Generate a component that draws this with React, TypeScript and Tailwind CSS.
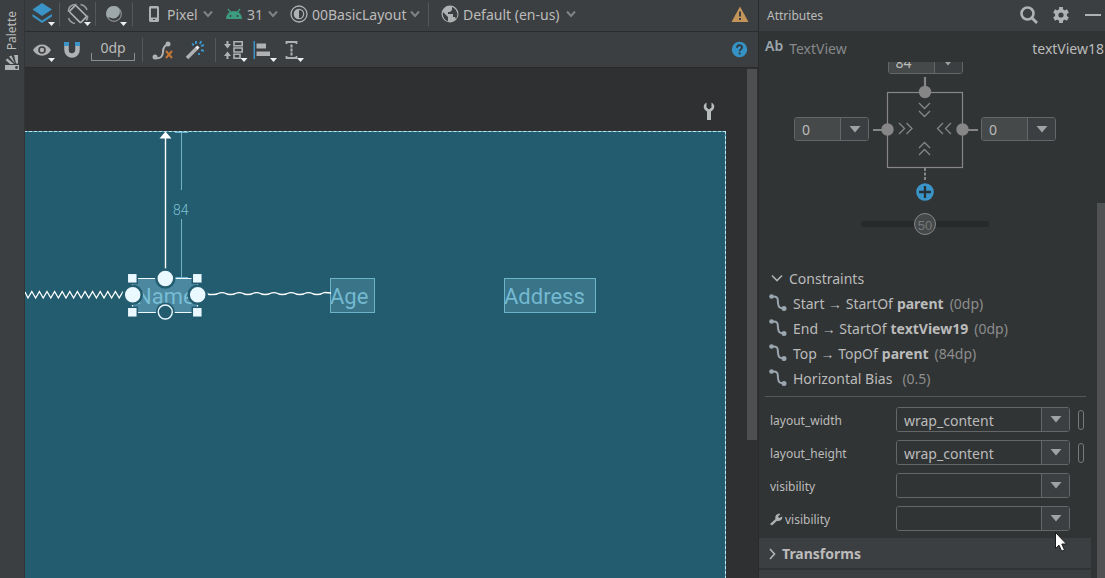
import React from "react";

const zigzag =
  "M25 292" +
  Array.from({ length: 13 }, (_, i) => {
    const x = 25 + i * 7.6;
    return ` L${x + 3} 298 L${x + 6.8} 291.5`;
  }).join("");

const wave =
  "M207 293 L209 294.5 H213" +
  Array.from({ length: 7 }, (_, i) => {
    const x = 213 + i * 17.3;
    return i < 6
      ? ` q4 0 5 -1 q4 -1.8 8 0 q1 1 4.3 1`
      : ` q4 0 5 -1 L${x + 8} 292.5 L331 293`;
  }).join("");

function Separator() {
  return <span className="h-6 w-px shrink-0 bg-[#555759]" />;
}

function Chevron() {
  return (
    <svg width="10" height="8" viewBox="0 0 10 8" className="shrink-0" aria-hidden="true">
      <path d="M1 1.500 5 6l4-4.500" fill="none" stroke="#7f8385" strokeWidth="2" />
    </svg>
  );
}

function ToolButton({
  label,
  className,
  children,
}: {
  label: string;
  className: string;
  children: React.ReactNode;
}) {
  return (
    <button type="button" aria-label={label} className={`flex h-full shrink-0 items-center justify-center ${className}`}>
      <svg width="28" height="28" viewBox="0 0 28 28" className="shrink-0" aria-hidden="true">
        {children}
      </svg>
    </button>
  );
}

function More({ x = 20 }: { x?: number }) {
  return <path d={`M${x} 22h7l-3.500 4z`} fill="#eceeef" />;
}

function MenuButton({
  text,
  className,
  icon,
}: {
  text: string;
  className: string;
  icon: React.ReactNode;
}) {
  return (
    <button type="button" className={`flex h-full shrink-0 items-center whitespace-nowrap text-left ${className}`}>
      <svg width="18" height="20" viewBox="0 0 18 20" className="shrink-0" aria-hidden="true">
        {icon}
      </svg>
      <span className="ml-1 flex-1 pt-px">{text}</span>
      <Chevron />
    </button>
  );
}

function DesignToolbar() {
  return (
    <div className="flex h-8 items-center border-b border-[#2b2b2b] bg-[#3c3f41] pb-1 text-[14px]">
      <ToolButton label="Select design surface" className="w-[34px]">
        <path d="M4.500 9.500 14 3l10 6.500L14 16z" fill="#3a94c8" />
        <path d="M4.500 14 14 20.500 24 14v2.500L14 23 4.500 16.500z" fill="#3a94c8" />
        <More />
      </ToolButton>
      <Separator />
      <ToolButton label="Orientation" className="w-[35px]">
        <rect x="9.500" y="6" width="9" height="16" rx="1" fill="none" stroke="#afb1b3" strokeWidth="1.600" transform="rotate(-45 14 14)" />
        <path d="M4.500 12C4 7 8 4 12.500 4.500M4.500 18c1 3 3.500 5 6.500 5.500M23.500 15.500c.3 2-.2 4-1.500 5M16.500 4.500c3 .6 5.500 2.500 6.500 5.500" fill="none" stroke="#9a9d9f" strokeWidth="1.500" />
        <More />
      </ToolButton>
      <Separator />
      <ToolButton label="Night mode" className="w-[36px]">
        <circle cx="14" cy="14" r="7.300" fill="none" stroke="#8d9294" strokeWidth="1.200" />
        <path d="M18.500 8a6.500 6.500 0 0 1-8.500 9.500 8 8 0 0 1-2.800-.5A7.300 7.300 0 0 1 18.500 8z" fill="#9da8ab" />
        <More />
      </ToolButton>
      <Separator />
      <MenuButton
        text="Pixel"
        className="ml-3 w-[68px]"
        icon={
          <path fillRule="evenodd" d="M5.500 2h7A1.500 1.500 0 0 1 14 3.500v13a1.500 1.500 0 0 1-1.500 1.500h-7A1.500 1.500 0 0 1 4 16.500v-13A1.500 1.500 0 0 1 5.500 2zM6 4.500v9h6v-9zm2 10.500v1h2v-1z" fill="#afb1b3" />
        }
      />
      <MenuButton
        text="31"
        className="ml-3 w-[53px]"
        icon={
          <>
            <path d="M1 15a8 8 0 0 1 16 0z" fill="#3d9c80" />
            <path d="m3 5 3 4M15 5l-3 4" stroke="#3d9c80" strokeWidth="1.300" />
            <circle cx="5.500" cy="12" r="1" fill="#3c3f41" />
            <circle cx="12.500" cy="12" r="1" fill="#3c3f41" />
          </>
        }
      />
      <MenuButton
        text="00BasicLayout"
        className="ml-3 w-[130px]"
        icon={
          <>
            <circle cx="9" cy="10" r="8" fill="none" stroke="#afb1b3" strokeWidth="1.300" />
            <circle cx="9" cy="10" r="4.700" fill="none" stroke="#afb1b3" strokeWidth="1.200" />
            <path d="M9 5a5 5 0 0 0 0 10z" fill="#afb1b3" />
          </>
        }
      />
      <span className="w-2" />
      <Separator />
      <MenuButton
        text="Default (en-us)"
        className="ml-3 w-[135px]"
        icon={
          <>
            <circle cx="9" cy="10" r="8.500" fill="#afb1b3" />
            <path d="M2 8l5 5v4.500A8 8 0 0 1 2 8zM11 3v3L9 8H7v2h5v3h2l1 2a8 8 0 0 0-2-11z" fill="#3c3f41" />
          </>
        }
      />
      <span className="flex-1" />
      <button type="button" aria-label="Show warnings" className="mr-2 shrink-0">
        <svg width="20" height="18" viewBox="0 0 20 18" aria-hidden="true">
          <path d="M10 1.500 18.500 17h-17z" fill="#c4955a" />
          <path d="M9 6.500h2v5H9zM9 13h2v2H9z" fill="#3c3f41" />
        </svg>
      </button>
    </div>
  );
}

function ConstraintToolbar() {
  return (
    <div className="flex h-9 items-center border-b border-[#2b2b2b] bg-[#3c3f41] text-[14px]">
      <ToolButton label="View options" className="w-[34px]">
        <path d="M5 14c4-7.500 14-7.500 18 0-4 7.500-14 7.500-18 0z" fill="#afb1b3" />
        <circle cx="14" cy="14" r="3.800" fill="#3c3f41" />
        <circle cx="14" cy="14" r="2.200" fill="#afb1b3" />
        <More />
      </ToolButton>
      <ToolButton label="Autoconnect" className="w-[26px]">
        <path d="M8.500 9.500V14a5.500 5.500 0 0 0 11 0V9.500" fill="none" stroke="#afb1b3" strokeWidth="4.500" />
        <path d="M6 6h5v4H6zM17 6h5v4h-5z" fill="#3a94c8" />
      </ToolButton>
      <button type="button" className="ml-[6px] flex h-[22px] w-[44px] shrink-0 flex-col items-center leading-[18px]">
        <span>0dp</span>
        <span className="-mt-[4px] h-2 w-full border-x border-b border-[#8c8f91]" />
      </button>
      <span className="w-[7px]" />
      <Separator />
      <ToolButton label="Clear all constraints" className="w-[40px]">
        <path d="M6 22c6 1 8-2 8-6s1-7 6-8" fill="none" stroke="#afb1b3" strokeWidth="2" />
        <circle cx="6" cy="21" r="2.500" fill="#afb1b3" />
        <circle cx="19" cy="8" r="2.500" fill="#afb1b3" />
        <path d="m17 15 6 7M23 15l-6 7" stroke="#c57633" strokeWidth="2" />
      </ToolButton>
      <ToolButton label="Infer constraints" className="w-[24px]">
        <path d="M6 22 16.500 11.500" stroke="#afb1b3" strokeWidth="3.500" />
        <path d="m15.500 12.500 2-2" stroke="#eceeef" strokeWidth="3" />
        <path d="M15 5v3M11 8l2 1M20 5l-1 3M23 9l-3 1M20 14l3 1M18 17v2" stroke="#3a94c8" strokeWidth="2" />
      </ToolButton>
      <span className="w-[8px]" />
      <Separator />
      <ToolButton label="Pack" className="w-[36px]">
        <path d="M7.500 5v6M7.500 23v-6" stroke="#afb1b3" strokeWidth="2" />
        <path d="M4 8h7l-3.500 4.500zM4 20h7l-3.500-4.500z" fill="#afb1b3" />
        <path d="M14 5.800h8.200v4H14zM14 12h8.200v4H14zM14 18.300h6v4h-6z" fill="none" stroke="#afb1b3" strokeWidth="1.600" />
        <path d="M20.500 22h7L24 26z" fill="#eceeef" />
      </ToolButton>
      <ToolButton label="Align" className="w-[24px]">
        <path d="M3.500 5H5v18H3.500z" fill="#3a94c8" />
        <path d="M6.500 7.500H16v5H6.500zM6.500 15.500H20v4.500H6.500z" fill="#afb1b3" />
        <More />
      </ToolButton>
      <ToolButton label="Guidelines" className="w-[34px]">
        <path d="M7 6h11M7 22h11M7.500 5v3M17.500 5v3M7.500 20v3M17.500 20v3" stroke="#afb1b3" strokeWidth="1.800" />
        <path d="M12.500 8.500v11" stroke="#afb1b3" strokeWidth="2" strokeDasharray="3 1" />
        <path d="M18 22h7l-3.500 4z" fill="#eceeef" />
      </ToolButton>
      <span className="flex-1" />
      <button type="button" aria-label="Help" className="mr-[10px] shrink-0">
        <svg width="17" height="17" viewBox="0 0 17 17" aria-hidden="true">
          <circle cx="8.500" cy="8.500" r="7.700" fill="#3592c4" />
          <path d="M6 6.800c0-3.400 5-3.400 5-.3 0 1.900-2.400 1.800-2.400 3.700M8.600 11.500v2" fill="none" stroke="#30373b" strokeWidth="1.800" />
        </svg>
      </button>
    </div>
  );
}

function Blueprint() {
  return (
    <div className="relative mr-[21px] h-full overflow-hidden bg-[#235c6f] font-[Roboto,sans-serif]">
      <div className="absolute inset-x-0 top-0 h-px bg-[#5ba4b9]" />
      <div className="absolute inset-y-0 right-0 w-px bg-[#5ba4b9]" />
      <div className="absolute -bottom-px -left-px right-0 top-0 border border-dashed border-[#b9e6f2]" />
      <div className="absolute left-[107px] top-[147px] h-[35px] w-[66px] bg-[#4c88a0] pl-[4px] text-[22px] leading-[37px] text-[#78bdd4]">
        Name
      </div>
      <div className="absolute left-[305px] top-[147px] h-[35px] w-[45px] bg-[#397488] text-[22px] leading-[38px] text-[#74b9d0] outline-1 -outline-offset-1 outline-[#6bb4c9]">
        Age
      </div>
      <div className="absolute left-[479px] top-[147px] h-[35px] w-[92px] bg-[#397488] text-[22px] leading-[38px] text-[#74b9d0] outline-1 -outline-offset-1 outline-[#6bb4c9]">
        Address
      </div>
      <span className="absolute left-[148px] top-[71px] text-[14px] font-light leading-4 text-[#7cc0d4]">84</span>
      <svg className="absolute left-0 top-0" width="320" height="200" viewBox="25 131 320 200" aria-hidden="true">
        <path d="M175 132.500h13M181.500 133v57M181.500 219v59M175 277.500h13" stroke="#6fb3ca" fill="none" />
        <path d="M165.500 136v134" stroke="#fff" strokeWidth="1.400" />
        <path d="m165.500 131.500 6 7h-12z" fill="#fff" />
        <path d={zigzag} fill="none" stroke="#fff" strokeWidth="1.300" />
        <path d={wave} fill="none" stroke="#fff" strokeWidth="1.300" />
        <path d="M132.500 278.500h65v34h-65z" fill="none" stroke="#eef9ff" strokeWidth="1.200" />
        <g fill="#eaf8ff" stroke="#235c6f" strokeWidth="1.500">
          <rect x="127.300" y="273.300" width="10" height="10" />
          <rect x="192.300" y="273.300" width="10" height="10" />
          <rect x="127.300" y="307.300" width="10" height="10" />
          <rect x="192.300" y="307.300" width="10" height="10" />
        </g>
        <g fill="#eaf8ff" stroke="#235c6f" strokeWidth="2.500">
          <circle cx="165.300" cy="278.500" r="9" />
          <circle cx="132.700" cy="294.700" r="9" />
          <circle cx="197.700" cy="294.700" r="9" />
        </g>
        <circle cx="165.300" cy="312" r="9.500" fill="#235c6f" />
        <circle cx="165.300" cy="312" r="7" fill="none" stroke="#eaf8ff" strokeWidth="1.400" />
      </svg>
    </div>
  );
}

function Combo({
  id,
  label,
  value,
  className,
  arrow,
  field,
}: {
  id: string;
  label?: string;
  value: string;
  className: string;
  arrow: string;
  field: string;
}) {
  return (
    <span className={`grid overflow-hidden rounded-[3px] border border-[#646667] ${className}`}>
      <select id={id} aria-label={label} defaultValue={value} className={`col-start-1 row-start-1 min-w-0 appearance-none outline-none ${field}`}>
        <option value={value}>{value}</option>
      </select>
      <span className={`pointer-events-none col-start-1 row-start-1 flex items-center justify-center justify-self-end border-l border-[#646667] bg-[#3c3f41] ${arrow}`}>
        <svg width="12" height="7" viewBox="0 0 12 7" aria-hidden="true">
          <path d="M.5 0h11L6 6.500z" fill="#9fa2a4" />
        </svg>
      </span>
    </span>
  );
}

function MarginCombo({ id, label, value, className }: { id: string; label: string; value: string; className: string }) {
  return (
    <Combo
      id={id}
      label={label}
      value={value}
      className={`h-6 w-[75px] ${className}`}
      arrow="w-7"
      field="bg-[#45494a] pl-[7px] text-[14px] text-[#bbbbbb]"
    />
  );
}

function ConstraintWidget() {
  return (
    <div className="flex flex-col items-center">
      <MarginCombo id="margin-top" label="Top margin" value="84" className="-mt-[12px]" />
      <div className="flex items-start">
        <MarginCombo id="margin-start" label="Start margin" value="0" className="mt-[43px]" />
        <svg width="112" height="130" viewBox="869 74 112 130" aria-hidden="true">
          <g stroke="#868686" fill="none">
            <rect x="887.500" y="92.500" width="75" height="75" strokeWidth="1.200" />
            <path d="M925 77v15M873 130h14M963 130h15" strokeWidth="2.200" />
            <path d="M925 168v13" strokeWidth="2" strokeDasharray="3 1.500" />
            <path strokeWidth="1.300" d="m919 103 5.500 5.500 5.500-5.500M919 111l5.500 5.500 5.500-5.500M919 148l5.500-5.500 5.500 5.500M919 155l5.500-5.500 5.500 5.500M899 123l5.500 5.500-5.500 5.500M906.500 123l5.500 5.500-5.500 5.500M943 123l-5.500 5.500 5.500 5.500M951 123l-5.500 5.500 5.500 5.500" />
          </g>
          <g fill="#868686">
            <circle cx="925" cy="92" r="6.200" />
            <circle cx="887.500" cy="129.500" r="6.200" />
            <circle cx="962.500" cy="129.500" r="6.200" />
          </g>
          <circle cx="925" cy="192" r="8.800" fill="#3a94c8" />
          <path d="M925 186v12M919 192h12" stroke="#263238" strokeWidth="2.300" />
        </svg>
        <MarginCombo id="margin-end" label="End margin" value="0" className="mt-[43px]" />
      </div>
      <div className="mt-[8px] grid h-6 w-32 items-center">
        <input
          type="range"
          min="0"
          max="100"
          defaultValue="50"
          aria-label="Horizontal bias"
          className="col-start-1 row-start-1 h-[6px] w-full appearance-none rounded-sm bg-[#27292a] [&::-webkit-slider-thumb]:size-[22px] [&::-webkit-slider-thumb]:appearance-none [&::-webkit-slider-thumb]:rounded-full [&::-webkit-slider-thumb]:border [&::-webkit-slider-thumb]:border-solid [&::-webkit-slider-thumb]:border-[#86888a] [&::-webkit-slider-thumb]:bg-[#454849]"
        />
        <span className="pointer-events-none relative col-start-1 row-start-1 justify-self-center pt-[3px] font-['Liberation_Sans',sans-serif] text-[13px] leading-4 text-[#77797a]">50</span>
      </div>
    </div>
  );
}

const constraints = [
  { text: "Start → StartOf", target: "parent", value: "(0dp)" },
  { text: "End → StartOf", target: "textView19", value: "(0dp)" },
  { text: "Top → TopOf", target: "parent", value: "(84dp)" },
  { text: "Horizontal Bias", target: "", value: "(0.5)" },
];

function ConstraintList() {
  return (
    <section className="mt-[30px] text-[14px]">
      <button type="button" className="ml-3 flex h-[25px] items-center gap-1.5">
        <svg width="12" height="9" viewBox="0 0 12 9" aria-hidden="true">
          <path d="m1 1.500 5 5 5-5" fill="none" stroke="#afb1b3" strokeWidth="1.600" />
        </svg>
        Constraints
      </button>
      <ul>
        {constraints.map((c) => (
          <li key={c.text} className="flex h-[25px] items-center whitespace-nowrap pl-[10px]">
            <svg width="18" height="20" viewBox="0 0 18 20" className="mr-[6px] shrink-0" aria-hidden="true">
              <path d="M3 2.500c7-.5 5.500 3 6 6.500.3 4 1.500 5.500 6 5" fill="none" stroke="#9aa7b0" strokeWidth="2" />
              <circle cx="2.500" cy="2.500" r="2.300" fill="#9aa7b0" />
              <circle cx="15" cy="14.500" r="2.500" fill="#9aa7b0" />
            </svg>
            <span>{c.text}</span>
            <b className="ml-1 font-bold">{c.target}</b>
            <span className="ml-[6px] text-[#8c8c8c]">{c.value}</span>
          </li>
        ))}
      </ul>
    </section>
  );
}

const properties = [
  { id: "layout-width", label: "layout_width", value: "wrap_content", pill: true, tool: false },
  { id: "layout-height", label: "layout_height", value: "wrap_content", pill: true, tool: false },
  { id: "visibility", label: "visibility", value: "", pill: false, tool: false },
  { id: "tools-visibility", label: "visibility", value: "", pill: false, tool: true },
];

function PropertyList() {
  return (
    <div className="ml-[6px] mr-[5px] mt-[5px] flex flex-col gap-2 border-t border-[#55585a] pl-[5px] pt-[10px]">
      {properties.map((p) => (
        <div key={p.id} className="flex h-[25px] items-center">
          <label htmlFor={p.id} className="flex flex-1 items-center gap-[2px] pt-[2px] text-[12px]">
            {p.tool && (
              <svg width="13" height="14" viewBox="0 0 13 14" aria-hidden="true">
                <path d="M0 11 5.500 6C4.500 2.500 7.500 0 10.500 1L8 3.500l1 1.500L12.300 3.500c.3 3.500-2.800 5-5.300 4.200L2 12.500z" fill="#afb1b3" />
              </svg>
            )}
            {p.label}
          </label>
          <Combo
            id={p.id}
            value={p.value}
            className="h-[25px] w-[174px]"
            arrow="w-7"
            field="bg-[#313435] pl-[7px] pt-px text-[14px] text-[#bbbbbb]"
          />
          <span className="flex w-[16px] justify-end">
            {p.pill && (
              <button type="button" aria-label={`Pick a resource for ${p.label}`} className="mr-[2px] h-5 w-[6px] rounded-full border border-[#77797a]" />
            )}
          </span>
        </div>
      ))}
    </div>
  );
}

function AttributesPanel() {
  return (
    <aside className="relative flex w-[347px] shrink-0 flex-col overflow-hidden border-l border-[#2b2b2b] bg-[#313435]">
      <header className="flex h-[31px] shrink-0 items-center bg-[#3c3f41] pb-[2px] pl-2">
        <h2 className="flex-1 pt-[2px] text-[12px]">Attributes</h2>
        <button type="button" aria-label="Search" className="mr-[13px]">
          <svg width="20" height="20" viewBox="0 0 20 20" aria-hidden="true">
            <circle cx="8.500" cy="8.500" r="6" fill="none" stroke="#afb1b3" strokeWidth="2.600" />
            <path d="m13 13 5 5" stroke="#afb1b3" strokeWidth="2.800" />
          </svg>
        </button>
        <button type="button" aria-label="Settings" className="mr-[15px]">
          <svg width="18" height="18" viewBox="0 0 18 18" aria-hidden="true">
            <circle cx="9" cy="9" r="4.300" fill="none" stroke="#afb1b3" strokeWidth="3.400" />
            <path d="M9 1v3M9 14v3M2.100 5l2.600 1.500M13.300 11.500l2.600 1.500M2.100 13l2.600-1.500M13.300 6.500 15.900 5" stroke="#afb1b3" strokeWidth="3.800" />
          </svg>
        </button>
        <button type="button" aria-label="Hide" className="mr-1 flex h-4 items-center">
          <span className="block h-[2px] w-4 bg-[#afb1b3]" />
        </button>
      </header>
      <div className="flex h-[31px] shrink-0 items-center whitespace-nowrap pl-[6px] pr-px text-[14px]">
        <b className="mb-[3px] font-semibold text-[#9da8ae]">Ab</b>
        <span className="ml-[6px] mt-1 text-[#86888a]">TextView</span>
        <span className="ml-auto mt-1">textView18</span>
      </div>
      <div className="flex min-h-0 flex-1">
        <div className="min-w-0 flex-1 overflow-hidden">
          <ConstraintWidget />
          <ConstraintList />
          <PropertyList />
          <button type="button" className="mt-[7px] flex h-[30px] w-full items-center gap-[6px] bg-[#3c3f41] pl-[10px] pt-px text-[14px] font-bold">
            <svg width="7" height="12" viewBox="0 0 7 12" aria-hidden="true">
              <path d="m1 1 4.500 5L1 11" fill="none" stroke="#afb1b3" strokeWidth="1.700" />
            </svg>
            Transforms
          </button>
          <div className="mt-[2px] h-[30px] bg-[#3c3f41]" />
        </div>
        <div className="ml-[6px] mt-[141px] w-2 shrink-0 bg-[#505253]" />
      </div>
      <svg className="absolute left-[295px] top-[531px]" width="14" height="22" viewBox="0 0 14 22" aria-hidden="true">
        <path d="M1.500 1.500v16l3.500-3.300 2.700 6 2.800-1.200-2.700-6h4.700z" fill="#fff" stroke="#1b1b1b" />
      </svg>
    </aside>
  );
}

export default function App() {
  return (
    <div className="flex h-screen w-full overflow-hidden bg-[#2f3032] font-['Noto_Sans',sans-serif] text-[#bbbbbb]">
      <nav className="flex w-[25px] shrink-0 flex-col items-center border-r border-[#323435] bg-[#3c3f41] pt-[11px]">
        <button type="button" className="flex flex-col items-center gap-[5px] text-[12px] leading-[18px]">
          <span className="rotate-180 [writing-mode:vertical-rl]">Palette</span>
          <svg width="16" height="16" viewBox="0 0 16 16" aria-hidden="true">
            <path d="M1 10h14v5H1z" fill="#afb1b3" />
            <circle cx="12.500" cy="12.500" r="1.400" fill="#3c3f41" />
            <path d="m1.500 5 2-1.500L10 9H6zM5 1.500 7.500.500 11 8.500zM10 0h4v8.500h-2z" fill="#afb1b3" />
          </svg>
        </button>
      </nav>
      <main className="flex min-w-0 flex-1 flex-col">
        <DesignToolbar />
        <ConstraintToolbar />
        <div className="flex min-h-0 flex-1">
          <div className="flex min-w-0 flex-1 flex-col">
            <div className="flex h-[63px] shrink-0 items-end justify-end pb-[10px] pr-[31px]">
              <svg width="14" height="20" viewBox="0 0 14 20" aria-hidden="true">
                <path d="M4.500 1.500v5l2.500 2 2.500-2v-5c4 2 3.500 7-.5 9V19H5v-8.500c-4-2-4.500-7-.5-9z" fill="#b9bcbd" />
              </svg>
            </div>
            <div className="min-h-0 flex-1">
              <Blueprint />
            </div>
          </div>
          <div className="mr-px mt-px h-[371px] w-[10px] shrink-0 bg-[#4d4f50]" />
        </div>
      </main>
      <AttributesPanel />
    </div>
  );
}
